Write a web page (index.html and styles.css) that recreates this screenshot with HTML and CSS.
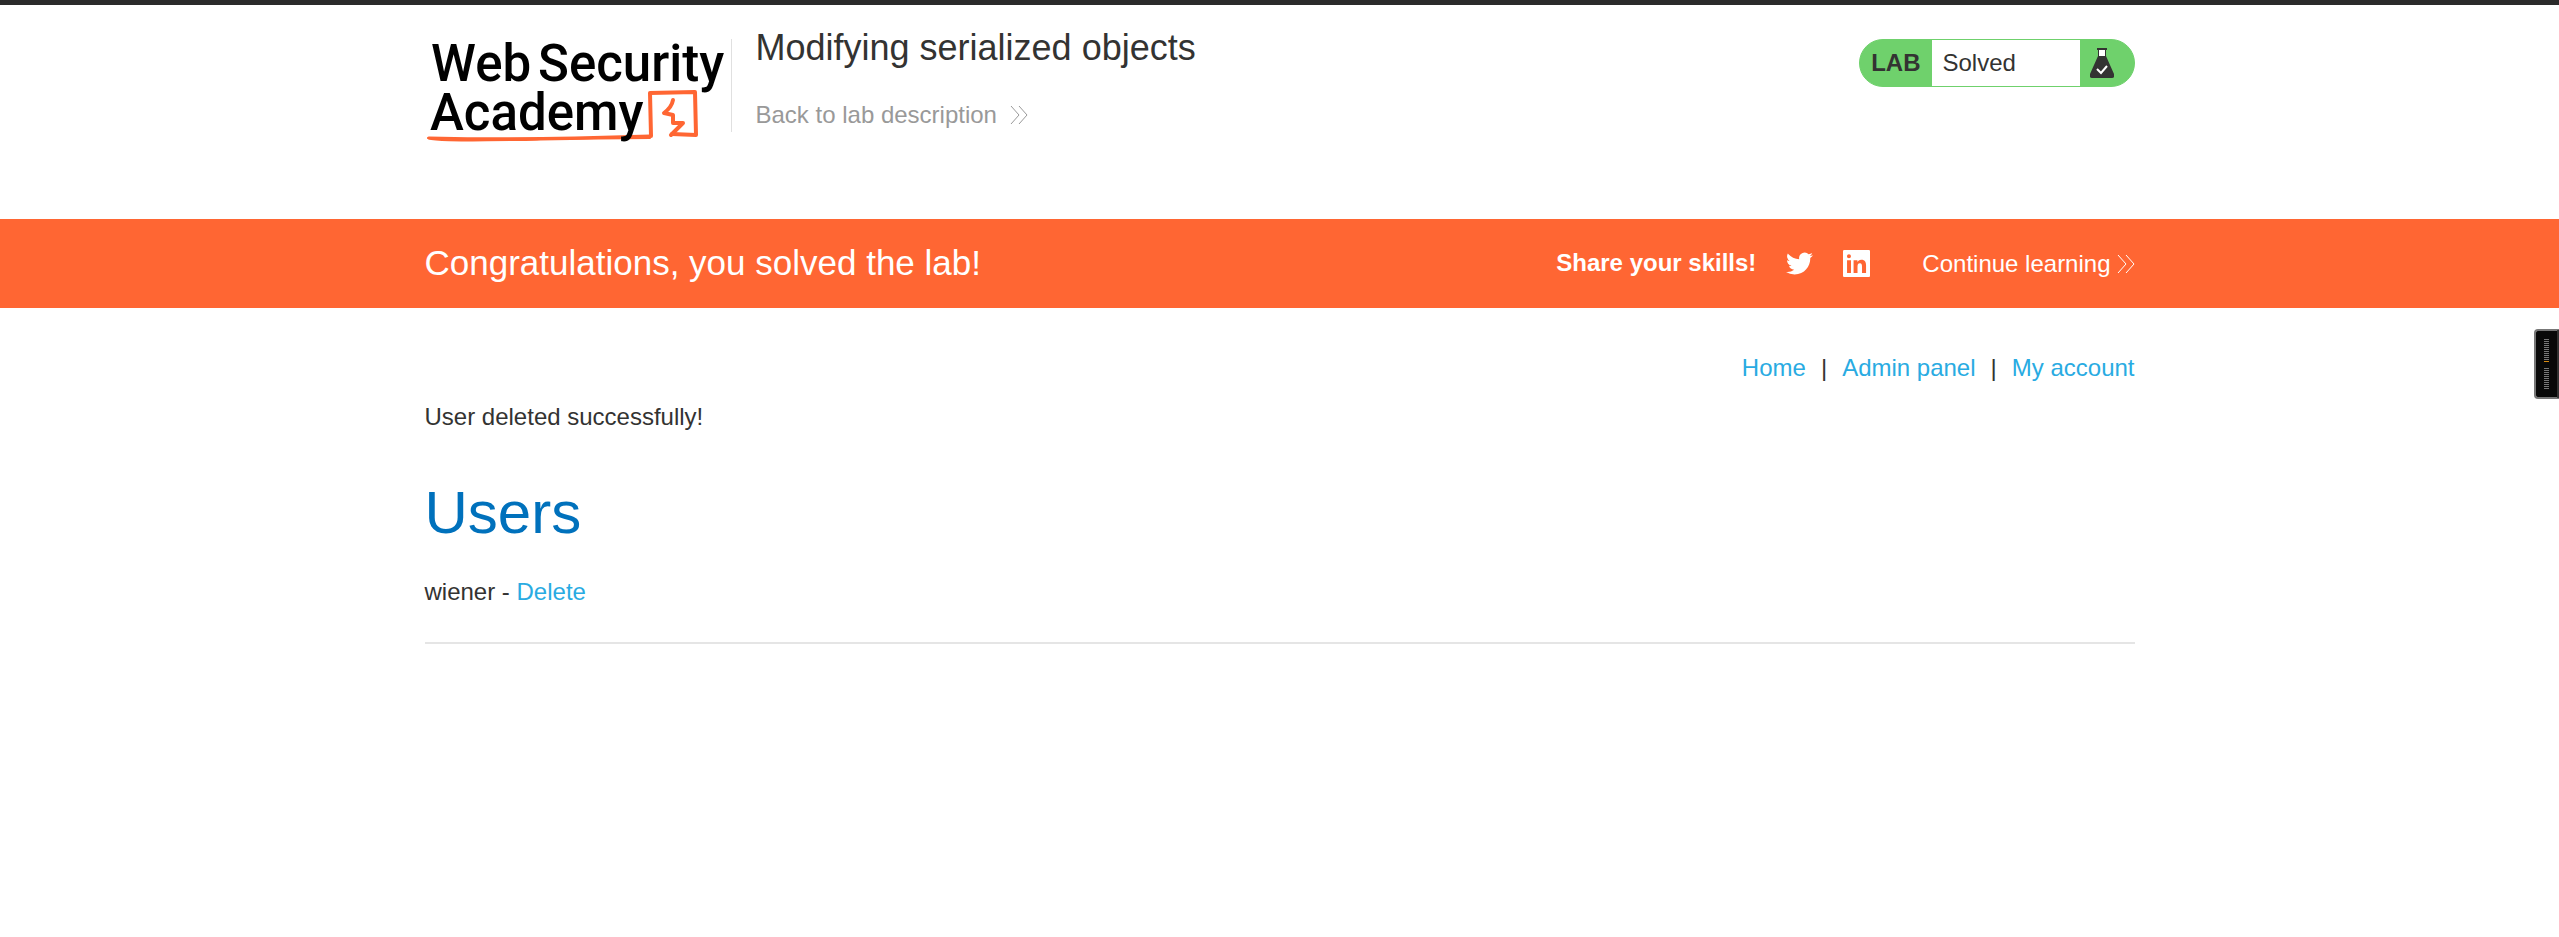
FILE: index.html
```html
<!DOCTYPE html>
<html lang="en">
<head>
<meta charset="utf-8">
<title>Modifying serialized objects</title>
<link rel="stylesheet" href="styles.css">
</head>
<body>
<header class="lab-header">
  <div class="container header-row">
    <a class="logo" href="#" aria-label="Web Security Academy">
      <svg width="300" height="112" viewBox="0 4 300 112">
        <g fill="none" stroke="#ff6633" stroke-linecap="round" stroke-linejoin="round">
          <path stroke-width="2" d="M3 103 C14 107 50 105 100 105 C140 104 170 103 225 103"/>
          <path stroke-width="3" d="M4 103 C50 104 110 104 150 103 L225 101"/>
          <path stroke-width="4" d="M247 99 L271 100 L270 57 L225 58 L226 101"/>
          <path stroke-width="4" d="M248 65 C247 71 243 75 239 78 L248 80 L248 88 L258 88 L246 100"/>
        </g>
        <g class="logo-text">
          <text x="6" y="46">Web</text>
          <text x="113" y="46">Security</text>
          <text x="5" y="95">Academy</text>
        </g>
      </svg>
    </a>
    <div class="title-block">
      <h2 class="lab-title">Modifying serialized objects</h2>
      <a class="back-link" href="#">Back to lab description
        <svg class="arrows" width="18" height="18" viewBox="0 0 18 18"><path d="M1 0 L9 9 L1 18 M9 0 L17 9 L9 18"/></svg>
      </a>
    </div>
    <div class="lab-status">
      <span class="lab-tag">LAB</span>
      <span class="lab-state">Solved</span>
      <span class="lab-flask">
        <svg width="24" height="32" viewBox="0 0 24 32">
          <path fill="#fff" d="M9 2h6v8H9z"/>
          <path fill="#333332" d="M7 1h10v2h-1v6l8 18q1 4-2 4H2q-3 0-2-4L8 9V3H7zM9 3v6h6V3z"/>
          <path fill="none" stroke="#fff" stroke-width="2" d="M7 22l4 4 6-7"/>
        </svg>
      </span>
    </div>
  </div>
</header>
<section class="banner">
  <div class="container banner-row">
    <h4 class="banner-title">Congratulations, you solved the lab!</h4>
    <div class="share">
      <span class="share-label">Share your skills!</span>
      <a class="share-icon" href="#" aria-label="Twitter">
        <svg width="27" height="27" viewBox="0 0 24 24"><path fill="#fff" d="M23.95 4.57a10 10 0 0 1-2.82.77 4.96 4.96 0 0 0 2.16-2.72c-.95.55-2 .95-3.13 1.18a4.92 4.92 0 0 0-8.38 4.48C7.69 8.09 4.07 6.13 1.64 3.16a4.92 4.92 0 0 0 1.52 6.57 4.9 4.9 0 0 1-2.23-.61v.06a4.92 4.92 0 0 0 3.95 4.83 5 5 0 0 1-2.21.08 4.94 4.94 0 0 0 4.6 3.42A9.87 9.87 0 0 1 0 19.54a13.99 13.99 0 0 0 7.56 2.21c9.05 0 14-7.5 14-13.98 0-.21 0-.42-.02-.63a9.94 9.94 0 0 0 2.46-2.55z"/></svg>
      </a>
      <a class="share-icon" href="#" aria-label="LinkedIn">
        <svg width="27" height="27" viewBox="0 0 24 24"><path fill="#fff" fill-rule="evenodd" d="M1 0h22q1 0 1 1v22q0 1-1 1H1q-1 0-1-1V1q0-1 1-1zM3.6 9v11.5h3.5V9zM5.3 3.8a1.8 1.8 0 1 0 0 3.6 1.8 1.8 0 0 0 0-3.6zM9.4 9v11.5h3.5v-5.7c0-1.5.3-3 2.1-3s1.9 1.7 1.9 3.1v5.6h3.6v-6.3c0-3.1-.7-5.5-4.3-5.5-1.7 0-2.9 1-3.4 1.9V9z"/></svg>
      </a>
      <a class="continue-link" href="#">Continue learning
        <svg class="arrows" width="18" height="18" viewBox="0 0 18 18"><path d="M1 0 L9 9 L1 18 M9 0 L17 9 L9 18"/></svg>
      </a>
    </div>
  </div>
</section>
<main class="container content">
  <nav class="top-links">
    <a href="#">Home</a><span>|</span><a href="#">Admin panel</a><span>|</span><a href="#">My account</a>
  </nav>
  <p class="notice">User deleted successfully!</p>
  <h1 class="page-title">Users</h1>
  <div class="user-row"><span>wiener - </span><a href="#">Delete</a></div>
  <hr class="rule">
</main>
<aside class="side-widget" aria-hidden="true">
  <div class="meter meter-top"></div>
  <div class="meter"></div>
</aside>
</body>
</html>
```
FILE: styles.css
```css
* {
  box-sizing: border-box;
}

body {
  margin: 0;
  background: #fff;
  color: #333332;
  font-family: "Liberation Sans", Arial, sans-serif;
  font-size: 24px;
  line-height: 36px;
}

h1, h2, h4, p {
  margin: 0;
  font-weight: 400;
}

a {
  color: #29abe2;
  text-decoration: none;
}

.container {
  max-width: 1710px;
  margin: 0 auto;
}

.lab-header {
  border-top: 5px solid #2b2b2b;
  padding-bottom: 86px;
}

.header-row {
  display: flex;
  align-items: flex-start;
  padding-top: 34px;
}

.logo {
  display: flex;
  height: 93px;
  padding-right: 6px;
  border-right: 1px solid #e0e0e0;
}

.logo svg {
  overflow: visible;
}

.logo-text {
  font-family: Roboto, sans-serif;
  font-size: 51px;
  font-weight: 500;
  fill: #000;
}

.title-block {
  flex: 1;
  padding-left: 24px;
  margin-top: -12px;
}

.lab-title {
  font-size: 36px;
  line-height: 42px;
}

.back-link {
  display: inline-flex;
  align-items: center;
  gap: 13px;
  margin-top: 28px;
  color: #999;
}

.arrows {
  fill: none;
  stroke: currentColor;
  stroke-width: 1;
}

.lab-status {
  display: flex;
  height: 48px;
  border: 1px solid #6fd16c;
  border-radius: 24px;
  background: #6fd16c;
  overflow: hidden;
  line-height: 46px;
}

.lab-tag {
  padding: 0 11px;
  font-weight: 700;
}

.lab-state {
  width: 148px;
  padding-left: 11px;
  background: #fff;
}

.lab-flask {
  width: 54px;
  padding: 7px 0 0 10px;
  line-height: 0;
}

.banner {
  background: #ff6633;
  color: #fff;
}

.banner-row {
  display: flex;
  align-items: center;
  justify-content: space-between;
  height: 89px;
}

.banner-title {
  padding-bottom: 2px;
  font-size: 35px;
}

.share {
  display: flex;
  align-items: center;
}

.share-label {
  padding-bottom: 2px;
  font-weight: 700;
}

.share-icon {
  display: flex;
  margin-left: 30px;
}

.continue-link {
  display: flex;
  align-items: center;
  gap: 6px;
  margin-left: 52px;
  color: #fff;
}

.top-links {
  display: flex;
  justify-content: flex-end;
  gap: 15px;
  padding-top: 42px;
}

.notice {
  padding-top: 13px;
}

.page-title {
  margin-top: 42px;
  color: #0071bc;
  font-size: 60px;
  line-height: 72px;
}

.user-row {
  margin-top: 25px;
  white-space: pre;
}

.rule {
  height: 2px;
  margin: 32px 0 0;
  border: 0;
  background: #e5e5e5;
}

.side-widget {
  position: absolute;
  top: 329px;
  right: 0;
  width: 25px;
  height: 70px;
  padding: 8px 0 0 8px;
  border: 2px solid #777;
  border-right-color: #333;
  border-radius: 4px 0 0 4px;
  background: #090909;
}

.meter {
  width: 5px;
  height: 22px;
  background: repeating-linear-gradient(#777 0 1px, #090909 1px 2px);
}

.meter-top {
  height: 23px;
  margin-bottom: 6px;
  border-bottom: 1px solid #d98a10;
}
```
